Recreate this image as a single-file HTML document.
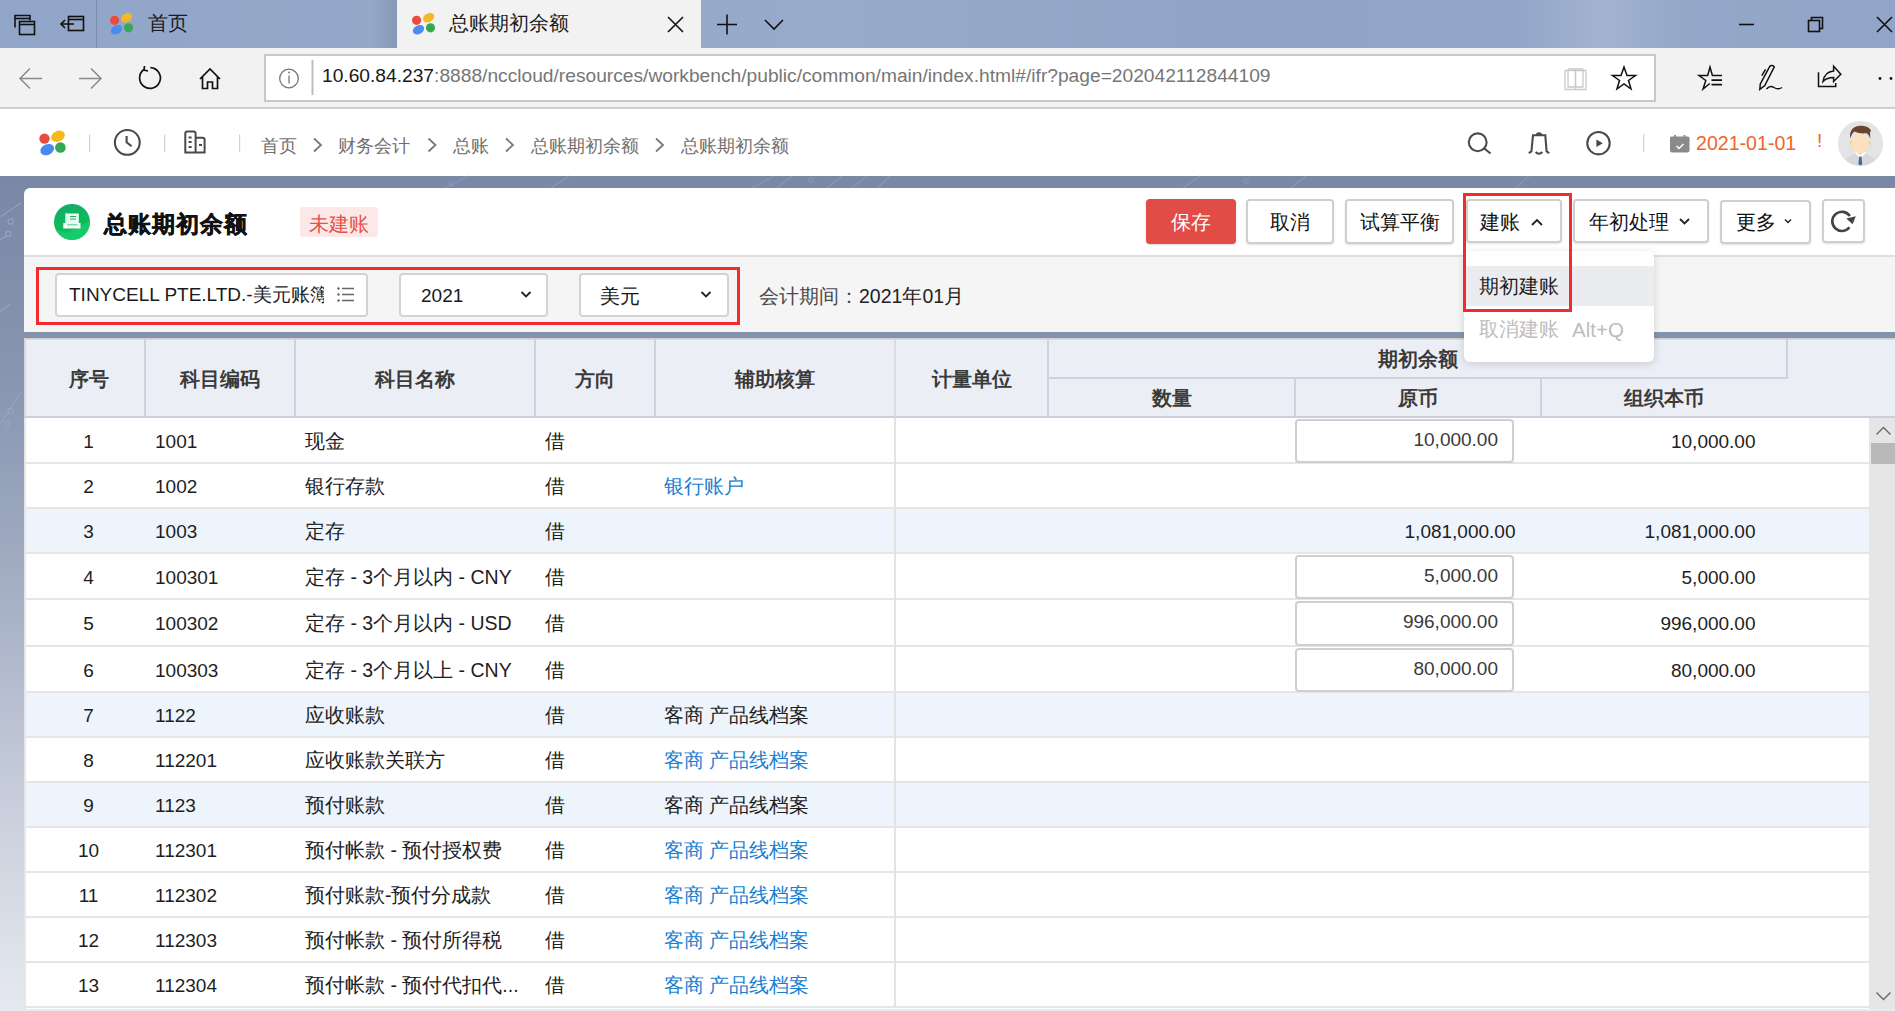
<!DOCTYPE html>
<html><head><meta charset="utf-8">
<style>
*{box-sizing:border-box;margin:0;padding:0}
html,body{width:1895px;height:1011px;overflow:hidden;background:#fff;font-family:"Liberation Sans",sans-serif;color:#222}
.a{position:absolute}
svg{position:absolute;overflow:visible}
.t{position:absolute;white-space:nowrap;line-height:1}
/* tab bar */
#tabbar{left:0;top:0;width:1895px;height:48px;background:linear-gradient(90deg,#91a5c8 0%,#95a9cb 25%,#96aacb 45%,#90a4c7 65%,#92a6c9 80%,#a3b3cf 84.5%,#93a7c9 89%,#91a5c8 100%)}
#tb{left:0;top:48px;width:1895px;height:61px;background:#f2f2f2;border-bottom:2px solid #cfcfcf}
#addr{left:264px;top:54px;width:1392px;height:48px;background:#fff;border:2px solid #c8c8c8}
#hdr{left:0;top:109px;width:1895px;height:67px;background:#fff}
#bg{left:0;top:176px;width:1895px;height:835px;background:linear-gradient(180deg,#7a88a6 0%,#8896b1 25%,#a5afc5 50%,#c8cedb 75%,#e6e9f0 100%)}
.btn{background:#fff;border:2px solid #cfcfcf;border-radius:4px;box-shadow:0 1px 2px rgba(0,0,0,.12)}
.inp{background:#fff;border:2px solid #d3d3d3;border-radius:4px}
.hd{font-size:19.5px;font-weight:bold;color:#3a3a3a}
.c{font-size:19.5px;color:#1e1e1e;font-weight:500}
.d{font-size:19px}
.lk{color:#1b7fd1}
.cin{background:#fff;border:2px solid #cfcfcf;border-radius:4px}
</style></head><body>
<!-- TAB BAR -->
<div id="tabbar" class="a"></div>
<svg style="left:0;top:0" width="1895" height="48">
  <!-- set aside icon -->
  <g fill="none" stroke="#111" stroke-width="1.6">
    <path d="M15 27.5V15.5H30V20.5"/><rect x="19.5" y="21.5" width="15" height="13"/>
    <path d="M15 18.5H30"/><path d="M19.5 24.5H34.5"/>
    <rect x="68.5" y="16.5" width="15" height="14"/><path d="M68.5 19.5H83.5"/>
    <path d="M61 24H74M65 20L61 24L65 28"/>
  </g>
  <line x1="96.5" y1="0" x2="96.5" y2="48" stroke="#7d8eae" stroke-width="1"/>
  <!-- logos -->
  <g transform="translate(110,13)">
    <circle cx="4.6" cy="7.3" r="4.6" fill="#e84c3d"/>
    <ellipse cx="16.6" cy="4.7" rx="6" ry="4.3" transform="rotate(-28 16.6 4.7)" fill="#f4b824"/>
    <ellipse cx="6.5" cy="16.7" rx="6" ry="4.3" transform="rotate(-28 6.5 16.7)" fill="#4a8cf0"/>
    <circle cx="18.5" cy="14.8" r="4.6" fill="#36a852"/>
  </g>
  <defs><linearGradient id="tsh" x1="0" x2="1"><stop offset="0" stop-color="#000" stop-opacity="0"/><stop offset="1" stop-color="#000" stop-opacity="0.1"/></linearGradient></defs><rect x="372" y="0" width="25" height="48" fill="url(#tsh)"/><rect x="397" y="0" width="304" height="48" fill="#f2f2f2"/>
  <g transform="translate(412,13)">
    <circle cx="4.6" cy="7.3" r="4.6" fill="#e84c3d"/>
    <ellipse cx="16.6" cy="4.7" rx="6" ry="4.3" transform="rotate(-28 16.6 4.7)" fill="#f4b824"/>
    <ellipse cx="6.5" cy="16.7" rx="6" ry="4.3" transform="rotate(-28 6.5 16.7)" fill="#4a8cf0"/>
    <circle cx="18.5" cy="14.8" r="4.6" fill="#36a852"/>
  </g>
  <g fill="none" stroke="#111" stroke-width="1.6">
    <path d="M668 17L683 32M683 17L668 32"/>
    <path d="M727 14.5V34.5M717 24.5H737"/>
    <path d="M765 20L774 29L783 20"/>
    <path d="M1739 24.5H1754"/>
    <rect x="1808.5" y="20.5" width="11" height="11"/><path d="M1811.5 20.5V17.5H1822.5V28.5H1819.5"/>
    <path d="M1877 17L1892 32M1892 17L1877 32"/>
  </g>
</svg>
<div class="t" style="left:147.5px;top:14px;font-size:19.8px;color:#1a1a1a">首页</div>
<div class="t" style="left:448.5px;top:14px;font-size:19.6px;color:#1a1a1a">总账期初余额</div>

<!-- TOOLBAR -->
<div id="tb" class="a"></div>
<div id="addr" class="a"></div>
<svg style="left:0;top:48px" width="1895" height="61">
  <g fill="none" stroke="#8a8a8a" stroke-width="1.5">
    <path d="M20 30.5H42M30 20.5L20 30.5L30 40.5"/>
    <path d="M79 30.5H101M91 20.5L101 30.5L91 40.5"/>
  </g>
  <g fill="none" stroke="#111" stroke-width="1.7">
    <path d="M144 21.5A10.4 10.4 0 1 0 150.4 19.6"/><path d="M144.5 18L144 22L148 23"/>
    <path d="M200 31L210 21L220 31M202.5 29V40.5H207.5V34H212.5V40.5H217.5V29"/>
  </g>
  <g fill="none" stroke="#777" stroke-width="1.3">
    <circle cx="289" cy="30.5" r="9.3"/>
    <path d="M289 27.5V35.5"/>
  </g>
  <circle cx="289" cy="24.5" r="1" fill="#777"/>
  <line x1="312.5" y1="12" x2="312.5" y2="47" stroke="#bdbdbd" stroke-width="2"/>
  <g fill="none" stroke="#c9c9c9" stroke-width="1.3">
    <path d="M1565 22.5V41.5H1586V22.5M1565 22.5H1575.5V41.5M1575.5 22.5H1586"/>
    <path d="M1568 21V39H1575.5M1583 21V39H1575.5M1568 21H1575.5V39M1583 21H1575.5"/>
  </g>
  <g fill="none" stroke="#111" stroke-width="1.5">
    <path d="M1624 19L1627 27.5H1635.5L1628.5 32.5L1631 41L1624 36L1617 41L1619.5 32.5L1612.5 27.5H1621Z"/>
    <path d="M1722 27.5H1712.4L1710 19L1707.7 27.5H1699L1705.8 32.5L1703 41L1709.8 35.5"/>
    <path d="M1711.5 32.2H1722M1711.5 36.7H1722" stroke-width="1.7"/>
    <path d="M1759.8 41.3L1760.3 36L1769.8 18.3C1770.8 16.8 1773.3 17.3 1774.3 18.8L1764.8 37.5Z"/>
    <path d="M1761.8 27.6L1765.6 21.3"/>
    <path d="M1766.5 41C1769 38 1771 37.5 1774 39.5C1777 41.5 1779 41.5 1782 39.5"/>
    <path d="M1818.5 24.2V38.6H1835.7V35"/>
    <path d="M1823 33.5C1824 27 1828 23.5 1833.6 23V18.3L1840.8 26.2L1833.6 33.5V29.5C1829 29.5 1825.5 31 1823 33.5Z"/>
  </g>
  <circle cx="1880" cy="30.5" r="1.4" fill="#111"/><circle cx="1891" cy="30.5" r="1.4" fill="#111"/>
</svg>
<div class="t" style="left:322px;top:66px;font-size:19.2px;color:#1a1a1a">10.60.84.237<span style="color:#767676">:8888/nccloud/resources/workbench/public/common/main/index.html#/ifr?page=202042112844109</span></div>

<!-- APP HEADER -->
<div id="hdr" class="a"></div>
<svg style="left:0;top:109px" width="1895" height="67">
  <g>
    <circle cx="44.5" cy="29.6" r="5.2" fill="#e84c3d"/>
    <ellipse cx="58" cy="27.3" rx="7.2" ry="5.3" transform="rotate(-25 58 27.3)" fill="#f6b91a"/>
    <ellipse cx="47.2" cy="40.6" rx="7.2" ry="5.3" transform="rotate(-25 47.2 40.6)" fill="#4a8af0"/>
    <circle cx="60.4" cy="38.5" r="5.3" fill="#35a853"/>
  </g>
  <g stroke="#d0d0d0" stroke-width="1.2">
    <line x1="89.6" y1="25.5" x2="89.6" y2="43"/>
    <line x1="164.6" y1="25.5" x2="164.6" y2="43"/>
    <line x1="239.6" y1="25.5" x2="239.6" y2="43"/>
    <line x1="1643.7" y1="25" x2="1643.7" y2="43"/>
  </g>
  <g fill="none" stroke="#4a4a4a" stroke-width="2.1">
    <circle cx="127.3" cy="33.4" r="12.4"/>
    <path d="M126.6 27V33.3L131.6 37.3"/>
  </g>
  <g fill="none" stroke="#4a4a4a" stroke-width="2">
    <path d="M185.3 43.6V24.6Q185.3 22.6 187.3 22.6H193.6Q195.6 22.6 195.6 24.6V43.6M195.6 28.7H202.6Q204.6 28.7 204.6 30.7V43.6M184.3 43.6H205.6"/>
    <path d="M188.6 28.4H191.6M188.6 33H191.6M188.6 38H191.6M199 36H202"/>
  </g>
  <g fill="none" stroke="#4a4a4a" stroke-width="2.1">
    <circle cx="1477.7" cy="33.3" r="8.9"/><path d="M1484 39.2L1490.5 44.5"/>
    <path d="M1528.8 44.2L1531.4 42.5L1533 26.3H1545.3L1546.6 42.5L1549.2 44.2"/>
    <path d="M1535.6 43Q1539 46.5 1542.4 43"/>
    <circle cx="1598.5" cy="34.2" r="11.2"/>
  </g>
  <path d="M1535.8 26.5A3.2 3.2 0 0 1 1542.2 26.5Z" fill="#4a4a4a"/>
  <path d="M1596.4 30.4L1596.4 38.1L1602.9 34.2Z" fill="#4a4a4a"/>
  <g transform="translate(1670,135) translate(0,-109)">
    <rect x="0" y="3.5" width="19.5" height="14" rx="2" fill="#8a8a8a"/>
    <rect x="0" y="1.5" width="19.5" height="5" rx="1.5" fill="#8a8a8a"/>
    <rect x="4" y="0" width="2" height="4" fill="#8a8a8a"/><rect x="13.5" y="0" width="2" height="4" fill="#8a8a8a"/>
    <path d="M6.5 11L9 13.5L13.5 9" fill="none" stroke="#fff" stroke-width="1.5"/>
  </g>
  <!-- avatar -->
  <circle cx="1860.5" cy="34.5" r="22.6" fill="#e3e4e6"/>
</svg>
<svg style="left:1838px;top:121px" width="46" height="46">
  <defs><clipPath id="avc"><circle cx="22.3" cy="22.3" r="22.3"/></clipPath></defs>
  <g clip-path="url(#avc)">
    <path d="M5 46C7 36 13 33 22.3 32.3C31.5 33 37.5 36 39.5 46Z" fill="#d6d8db"/>
    <rect x="19" y="26" width="6.6" height="7.5" fill="#f5cfa5"/>
    <path d="M16.8 32.3L22.3 37.3L27.8 32.3L26.3 30.8L22.3 34L18.3 30.8Z" fill="#fff"/>
    <path d="M21.2 35.5H23.4L24.2 43L22.3 45L20.4 43Z" fill="#3f6a94"/>
    <ellipse cx="13.3" cy="22" rx="1.8" ry="2.3" fill="#f6cfa6"/><ellipse cx="31.3" cy="22" rx="1.8" ry="2.3" fill="#f6cfa6"/>
    <ellipse cx="22.3" cy="22.5" rx="8.6" ry="9.8" fill="#fde0bd"/>
    <path d="M12.3 17.5C11 10 15 4.8 22.5 4.8C28 4.8 31 6.5 32.3 8.5L33.3 10.3L32 10.8L32.3 18C31.3 14.5 30 12.8 28 12.3C24 12.8 19.5 12 16.3 10.5C14.3 12.5 13 14.5 12.3 17.5Z" fill="#6a4630"/>
  </g>
</svg>
<div class="t" style="left:1696px;top:134px;font-size:19.6px;color:#f0652a">2021-01-01</div>
<div class="t" style="left:1817px;top:131px;font-size:19px;color:#f0652a">!</div>
<div class="t" style="left:261px;top:136.5px;font-size:18px;color:#6e6e6e;word-spacing:0">首页</div>
<div class="t" style="left:338px;top:136.5px;font-size:18px;color:#6e6e6e">财务会计</div>
<div class="t" style="left:453px;top:136.5px;font-size:18px;color:#6e6e6e">总账</div>
<div class="t" style="left:531px;top:136.5px;font-size:18px;color:#6e6e6e">总账期初余额</div>
<div class="t" style="left:681px;top:136.5px;font-size:18px;color:#6e6e6e">总账期初余额</div>
<svg style="left:0;top:0" width="900" height="176">
  <g fill="none" stroke="#777" stroke-width="1.8">
    <path d="M314 138.5L321 145L314 151.5"/>
    <path d="M428.5 138.5L435.5 145L428.5 151.5"/>
    <path d="M506 138.5L513 145L506 151.5"/>
    <path d="M656 138.5L663 145L656 151.5"/>
  </g>
</svg>

<!-- BACKGROUND -->
<div id="bg" class="a"></div>
<svg style="left:0;top:0" width="1895" height="500">
  <g fill="none" stroke="#9aa8c2" stroke-width="1.2" opacity="0.8">
    <path d="M0 217L21 203"/><circle cx="10.7" cy="221.5" r="2.6"/><circle cx="8.3" cy="234" r="2.6"/><path d="M0 240L6 236"/>
    <path d="M0 312L10 304"/>
    <path d="M0 424L21 392"/><circle cx="10.7" cy="411" r="2.6"/><circle cx="6.6" cy="424" r="2.6"/>
  </g>
  <g fill="none" stroke="#8b9cc0" stroke-width="1.1" opacity="0.8">
    <path d="M446 188L468 176"/><circle cx="451" cy="184" r="2"/>
    <path d="M551 188L569 176M752 188L774 176M777 188L792 176M827 188L842 176M852 188L867 176M877 188L890 176"/>
    <circle cx="811" cy="180" r="2.2"/>
    <path d="M1183 188L1200 176M1291 188L1306 176M1516 188L1529 176"/><circle cx="1246" cy="181" r="2.2"/>
  </g>
</svg>

<!-- CARD -->
<div class="a" style="left:24px;top:188px;width:1871px;height:67px;background:#fff;border-top-left-radius:6px"></div>
<div class="a" style="left:24px;top:255px;width:1871px;height:2px;background:#dedede"></div>
<div class="a" style="left:24px;top:257px;width:1871px;height:75px;background:#f5f5f5"></div>
<!-- green logo -->
<svg style="left:54px;top:204px" width="36" height="36">
  <defs><linearGradient id="gl" x1="0.3" y1="0" x2="0.6" y2="1"><stop offset="0" stop-color="#12ad68"/><stop offset="1" stop-color="#0cc24f"/></linearGradient>
  <clipPath id="glc"><circle cx="18" cy="18" r="18"/></clipPath></defs>
  <circle cx="18" cy="18" r="18" fill="url(#gl)"/>
  <path d="M0 25L12 29L36 17V36H0Z" fill="#1fd98a" opacity="0.45" clip-path="url(#glc)"/>
  <rect x="11.5" y="9.5" width="13.3" height="11" fill="#fff" opacity="0.92"/>
  <rect x="11.5" y="9.5" width="2" height="11" fill="#d9f5e6"/>
  <path d="M16 12.5H22M16 15H22" stroke="#1aae62" stroke-width="1.1"/>
  <path d="M9.3 19H13V21.3H23.5V19H26.5V24.5H9.3Z" fill="#fff" opacity="0.95"/>
</svg>
<div class="t" style="left:103.5px;top:212.5px;font-size:23.4px;letter-spacing:1.1px;font-weight:bold;color:#111;-webkit-text-stroke:0.45px #111">总账期初余额</div>
<div class="a" style="left:300px;top:207px;width:78px;height:30px;background:#fde8e8;border-radius:3px"></div>
<div class="t" style="left:309px;top:213.5px;font-size:20px;color:#e5514b">未建账</div>

<!-- buttons -->
<div class="a" style="left:1146px;top:199px;width:90px;height:45px;background:#e14c46;border-radius:4px;box-shadow:0 1px 2px rgba(0,0,0,.15)"></div>
<div class="t" style="left:1171px;top:212px;font-size:20px;color:#fff">保存</div>
<div class="a btn" style="left:1246px;top:199px;width:88px;height:45px"></div>
<div class="t" style="left:1270px;top:212px;font-size:20px;color:#111">取消</div>
<div class="a btn" style="left:1345px;top:199px;width:109px;height:45px"></div>
<div class="t" style="left:1360px;top:212px;font-size:20px;color:#111">试算平衡</div>
<div class="a btn" style="left:1466px;top:199px;width:96px;height:44px"></div>
<div class="t" style="left:1480px;top:212px;font-size:20px;color:#111">建账</div>
<div class="a btn" style="left:1573px;top:199px;width:136px;height:44px"></div>
<div class="t" style="left:1589px;top:212px;font-size:20px;color:#111">年初处理</div>
<div class="a btn" style="left:1720px;top:200px;width:91px;height:44px"></div>
<div class="t" style="left:1736px;top:212px;font-size:20px;color:#111">更多</div>
<div class="a btn" style="left:1822px;top:199px;width:43px;height:44px"></div>
<svg style="left:0;top:0" width="1895" height="260">
  <g fill="none" stroke="#222" stroke-width="1.8">
    <path d="M1532 225L1537 220L1542 225"/>
    <path d="M1680 219L1684.5 223.5L1689 219"/>
  </g>
  <path d="M1785 219.5L1788 222.5L1791 219.5" fill="none" stroke="#222" stroke-width="1.5"/>
  <path d="M1849.86 216.03A9.6 9.6 0 1 0 1849.46 227.31" fill="none" stroke="#444" stroke-width="2.6"/>
  <path d="M1846.3 218.6L1855.8 216.3L1852.6 224.2Z" fill="#444"/>
</svg>

<!-- filters -->
<div class="a inp" style="left:55px;top:273px;width:313px;height:44px"></div>
<div class="a" style="left:69px;top:280px;width:255px;height:30px;overflow:hidden"><div class="t" style="left:0;top:5px;font-size:19px;color:#1a1a1a">TINYCELL PTE.LTD.-美元账簿</div></div>
<svg style="left:0;top:0" width="800" height="340">
  <g fill="#666"><circle cx="338.5" cy="288.5" r="1.2"/><circle cx="338.5" cy="294.5" r="1.2"/><circle cx="338.5" cy="300.5" r="1.2"/></g>
  <g stroke="#666" stroke-width="1.4"><path d="M342 288.5H354M342 294.5H354M342 300.5H354"/></g>
</svg>
<div class="a inp" style="left:399px;top:273px;width:149px;height:44px"></div>
<div class="t" style="left:421px;top:286px;font-size:19px;color:#1a1a1a">2021</div>
<div class="a inp" style="left:579px;top:273px;width:150px;height:44px"></div>
<div class="t" style="left:599.5px;top:286px;font-size:20px;color:#1a1a1a">美元</div>
<div class="t" style="left:759px;top:286.5px;font-size:19.5px;color:#4a4a4a">会计期间：<span style="color:#222">2021年01月</span></div>

<!-- TABLE -->
<div class="a" style="left:24px;top:338px;width:1871px;height:673px;background:#fff"></div>
<div class="a" style="left:24px;top:338px;width:1871px;height:1px;background:#cfcfcf"></div>
<div class="a" style="left:24px;top:339px;width:1871px;height:1px;background:#dadbe0"></div>
<div class="a" style="left:24px;top:340px;width:1871px;height:77px;background:#eceef5"></div>
<div class="a" style="left:24px;top:338px;width:2px;height:80px;background:#d8d9dc"></div>
<div class="a" style="left:24px;top:416px;width:1871px;height:2px;background:#c9d0dc"></div>
<div class="a" style="left:144px;top:339px;width:2px;height:78px;background:#cdd3de"></div>
<div class="a" style="left:294px;top:339px;width:2px;height:78px;background:#cdd3de"></div>
<div class="a" style="left:534px;top:339px;width:2px;height:78px;background:#cdd3de"></div>
<div class="a" style="left:654px;top:339px;width:2px;height:78px;background:#cdd3de"></div>
<div class="a" style="left:1047px;top:339px;width:2px;height:78px;background:#cdd3de"></div>
<div class="a" style="left:894px;top:339px;width:2px;height:78px;background:#d9dbe0"></div>
<div class="a" style="left:1294px;top:378px;width:2px;height:39px;background:#cdd3de"></div>
<div class="a" style="left:1540px;top:378px;width:2px;height:39px;background:#cdd3de"></div>
<div class="a" style="left:1048px;top:377px;width:740px;height:2px;background:#cdd3de"></div>
<div class="a" style="left:1786px;top:339px;width:2px;height:39px;background:#cdd3de"></div>
<div class="t hd" style="left:-61.5px;top:370px;width:300px;text-align:center">序号</div>
<div class="t hd" style="left:69.5px;top:370px;width:300px;text-align:center">科目编码</div>
<div class="t hd" style="left:265px;top:370px;width:300px;text-align:center">科目名称</div>
<div class="t hd" style="left:445px;top:370px;width:300px;text-align:center">方向</div>
<div class="t hd" style="left:625px;top:370px;width:300px;text-align:center">辅助核算</div>
<div class="t hd" style="left:821.5px;top:370px;width:300px;text-align:center">计量单位</div>
<div class="t hd" style="left:1267.5px;top:350px;width:300px;text-align:center">期初余额</div>
<div class="t hd" style="left:1021.5px;top:389px;width:300px;text-align:center">数量</div>
<div class="t hd" style="left:1268px;top:389px;width:300px;text-align:center">原币</div>
<div class="t hd" style="left:1514px;top:389px;width:300px;text-align:center">组织本币</div>
<div class="a" style="left:24px;top:418px;width:2px;height:593px;background:#e6e6e6"></div>
<div class="a" style="left:26px;top:462px;width:1843px;height:2px;background:#e6e6e6"></div>
<div class="t c" style="left:28px;top:431.5px;width:121px;text-align:center"><span class="d">1</span></div>
<div class="t c" style="left:155px;top:431.5px;"><span class="d">1001</span></div>
<div class="t c" style="left:305px;top:431.5px;">现金</div>
<div class="t c" style="left:545px;top:431.5px;">借</div>
<div class="a cin" style="left:1295px;top:419px;width:219px;height:44px"></div>
<div class="t c" style="left:1298px;top:429.5px;width:200px;text-align:right;color:#3a3a3a"><span class="d">10,000.00</span></div>
<div class="t c" style="left:1555.5px;top:431.5px;width:200px;text-align:right"><span class="d">10,000.00</span></div>
<div class="a" style="left:26px;top:507px;width:1843px;height:2px;background:#e6e6e6"></div>
<div class="t c" style="left:28px;top:477.0px;width:121px;text-align:center"><span class="d">2</span></div>
<div class="t c" style="left:155px;top:477.0px;"><span class="d">1002</span></div>
<div class="t c" style="left:305px;top:477.0px;">银行存款</div>
<div class="t c" style="left:545px;top:477.0px;">借</div>
<div class="t c lk" style="left:664px;top:477.0px;">银行账户</div>
<div class="a" style="left:26px;top:509px;width:1843px;height:44px;background:#edf4fc"></div>
<div class="a" style="left:26px;top:552px;width:1843px;height:2px;background:#e6e6e6"></div>
<div class="t c" style="left:28px;top:522.0px;width:121px;text-align:center"><span class="d">3</span></div>
<div class="t c" style="left:155px;top:522.0px;"><span class="d">1003</span></div>
<div class="t c" style="left:305px;top:522.0px;">定存</div>
<div class="t c" style="left:545px;top:522.0px;">借</div>
<div class="t c" style="left:1315.5px;top:522.0px;width:200px;text-align:right"><span class="d">1,081,000.00</span></div>
<div class="t c" style="left:1555.5px;top:522.0px;width:200px;text-align:right"><span class="d">1,081,000.00</span></div>
<div class="a" style="left:26px;top:598px;width:1843px;height:2px;background:#e6e6e6"></div>
<div class="t c" style="left:28px;top:567.5px;width:121px;text-align:center"><span class="d">4</span></div>
<div class="t c" style="left:155px;top:567.5px;"><span class="d">100301</span></div>
<div class="t c" style="left:305px;top:567.5px;">定存 - 3个月以内 - CNY</div>
<div class="t c" style="left:545px;top:567.5px;">借</div>
<div class="a cin" style="left:1295px;top:555px;width:219px;height:44px"></div>
<div class="t c" style="left:1298px;top:565.5px;width:200px;text-align:right;color:#3a3a3a"><span class="d">5,000.00</span></div>
<div class="t c" style="left:1555.5px;top:567.5px;width:200px;text-align:right"><span class="d">5,000.00</span></div>
<div class="a" style="left:26px;top:645px;width:1843px;height:2px;background:#e6e6e6"></div>
<div class="t c" style="left:28px;top:614.0px;width:121px;text-align:center"><span class="d">5</span></div>
<div class="t c" style="left:155px;top:614.0px;"><span class="d">100302</span></div>
<div class="t c" style="left:305px;top:614.0px;">定存 - 3个月以内 - USD</div>
<div class="t c" style="left:545px;top:614.0px;">借</div>
<div class="a cin" style="left:1295px;top:601px;width:219px;height:45px"></div>
<div class="t c" style="left:1298px;top:612.0px;width:200px;text-align:right;color:#3a3a3a"><span class="d">996,000.00</span></div>
<div class="t c" style="left:1555.5px;top:614.0px;width:200px;text-align:right"><span class="d">996,000.00</span></div>
<div class="a" style="left:26px;top:691px;width:1843px;height:2px;background:#e6e6e6"></div>
<div class="t c" style="left:28px;top:660.5px;width:121px;text-align:center"><span class="d">6</span></div>
<div class="t c" style="left:155px;top:660.5px;"><span class="d">100303</span></div>
<div class="t c" style="left:305px;top:660.5px;">定存 - 3个月以上 - CNY</div>
<div class="t c" style="left:545px;top:660.5px;">借</div>
<div class="a cin" style="left:1295px;top:648px;width:219px;height:44px"></div>
<div class="t c" style="left:1298px;top:658.5px;width:200px;text-align:right;color:#3a3a3a"><span class="d">80,000.00</span></div>
<div class="t c" style="left:1555.5px;top:660.5px;width:200px;text-align:right"><span class="d">80,000.00</span></div>
<div class="a" style="left:26px;top:693px;width:1843px;height:44px;background:#edf4fc"></div>
<div class="a" style="left:26px;top:736px;width:1843px;height:2px;background:#e6e6e6"></div>
<div class="t c" style="left:28px;top:706.0px;width:121px;text-align:center"><span class="d">7</span></div>
<div class="t c" style="left:155px;top:706.0px;"><span class="d">1122</span></div>
<div class="t c" style="left:305px;top:706.0px;">应收账款</div>
<div class="t c" style="left:545px;top:706.0px;">借</div>
<div class="t c" style="left:664px;top:706.0px;">客商 产品线档案</div>
<div class="a" style="left:26px;top:781px;width:1843px;height:2px;background:#e6e6e6"></div>
<div class="t c" style="left:28px;top:751.0px;width:121px;text-align:center"><span class="d">8</span></div>
<div class="t c" style="left:155px;top:751.0px;"><span class="d">112201</span></div>
<div class="t c" style="left:305px;top:751.0px;">应收账款关联方</div>
<div class="t c" style="left:545px;top:751.0px;">借</div>
<div class="t c lk" style="left:664px;top:751.0px;">客商 产品线档案</div>
<div class="a" style="left:26px;top:783px;width:1843px;height:44px;background:#edf4fc"></div>
<div class="a" style="left:26px;top:826px;width:1843px;height:2px;background:#e6e6e6"></div>
<div class="t c" style="left:28px;top:796.0px;width:121px;text-align:center"><span class="d">9</span></div>
<div class="t c" style="left:155px;top:796.0px;"><span class="d">1123</span></div>
<div class="t c" style="left:305px;top:796.0px;">预付账款</div>
<div class="t c" style="left:545px;top:796.0px;">借</div>
<div class="t c" style="left:664px;top:796.0px;">客商 产品线档案</div>
<div class="a" style="left:26px;top:871px;width:1843px;height:2px;background:#e6e6e6"></div>
<div class="t c" style="left:28px;top:841.0px;width:121px;text-align:center"><span class="d">10</span></div>
<div class="t c" style="left:155px;top:841.0px;"><span class="d">112301</span></div>
<div class="t c" style="left:305px;top:841.0px;">预付帐款 - 预付授权费</div>
<div class="t c" style="left:545px;top:841.0px;">借</div>
<div class="t c lk" style="left:664px;top:841.0px;">客商 产品线档案</div>
<div class="a" style="left:26px;top:916px;width:1843px;height:2px;background:#e6e6e6"></div>
<div class="t c" style="left:28px;top:886.0px;width:121px;text-align:center"><span class="d">11</span></div>
<div class="t c" style="left:155px;top:886.0px;"><span class="d">112302</span></div>
<div class="t c" style="left:305px;top:886.0px;">预付账款-预付分成款</div>
<div class="t c" style="left:545px;top:886.0px;">借</div>
<div class="t c lk" style="left:664px;top:886.0px;">客商 产品线档案</div>
<div class="a" style="left:26px;top:961px;width:1843px;height:2px;background:#e6e6e6"></div>
<div class="t c" style="left:28px;top:931.0px;width:121px;text-align:center"><span class="d">12</span></div>
<div class="t c" style="left:155px;top:931.0px;"><span class="d">112303</span></div>
<div class="t c" style="left:305px;top:931.0px;">预付帐款 - 预付所得税</div>
<div class="t c" style="left:545px;top:931.0px;">借</div>
<div class="t c lk" style="left:664px;top:931.0px;">客商 产品线档案</div>
<div class="a" style="left:26px;top:1006px;width:1843px;height:2px;background:#e6e6e6"></div>
<div class="t c" style="left:28px;top:976.0px;width:121px;text-align:center"><span class="d">13</span></div>
<div class="t c" style="left:155px;top:976.0px;"><span class="d">112304</span></div>
<div class="t c" style="left:305px;top:976.0px;">预付帐款 - 预付代扣代...</div>
<div class="t c" style="left:545px;top:976.0px;">借</div>
<div class="t c lk" style="left:664px;top:976.0px;">客商 产品线档案</div>
<div class="a" style="left:894px;top:418px;width:2px;height:589px;background:#e3e3e3"></div>
<div class="a" style="left:24px;top:1009px;width:1871px;height:2px;background:#e8eaf0"></div>
<div class="a" style="left:1869px;top:418px;width:26px;height:591px;background:#e6e6e6"></div>
<div class="a" style="left:1871px;top:443px;width:24px;height:21px;background:#b9b9b9"></div>
<svg style="left:0;top:0" width="1895" height="1011"><g fill="none" stroke="#666" stroke-width="1.4"><path d="M1876.5 434.5L1883.5 427.5L1890.5 434.5"/><path d="M1876.5 992.5L1883.5 999.5L1890.5 992.5"/></g></svg>
<!-- /TABLE -->
<!-- red highlight boxes -->
<div class="a" style="left:36px;top:267px;width:704px;height:58px;border:3px solid #f42b2e"></div>

<svg style="left:0;top:0" width="800" height="340"><g fill="none" stroke="#222" stroke-width="1.8">
    <path d="M521.5 292L526 296.5L530.5 292"/>
    <path d="M701.5 292L706 296.5L710.5 292"/>
  </g></svg>
<div class="a" style="left:1463px;top:193px;width:109px;height:119px;border:3px solid #f42b2e"></div>
<!-- dropdown -->
<div class="a" style="left:1464px;top:251px;width:190px;height:111px;background:#fff;border-radius:6px;box-shadow:0 2px 8px rgba(0,0,0,.15)"></div>
<div class="a" style="left:1464px;top:266px;width:190px;height:40px;background:#ebecf0"></div>
<div class="t" style="left:1479px;top:277px;font-size:19.5px;color:#1e1e1e">期初建账</div>
<div class="t" style="left:1479px;top:320px;font-size:19.5px;color:#bdbdbd">取消建账</div>
<div class="t" style="left:1572px;top:320px;font-size:20.5px;color:#bdbdbd">Alt+Q</div>
<div class="a" style="left:1463px;top:193px;width:109px;height:119px;border:3px solid #f42b2e"></div>
</body></html>
